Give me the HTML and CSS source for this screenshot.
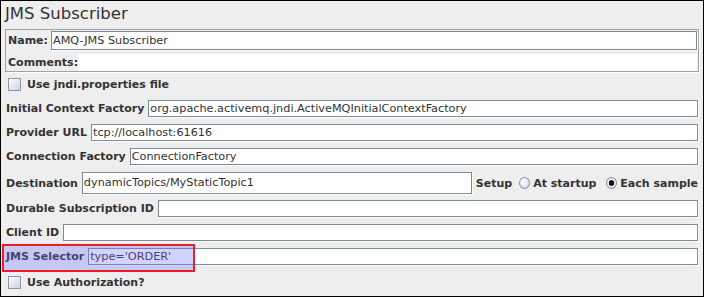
FILE: index.html
```html
<!DOCTYPE html>
<html lang="en">
<head>
    <meta charset="UTF-8">
    <title>JMS Subscriber</title>
    <link rel="stylesheet" href="styles.css">
</head>
<body>
    <div class="frame">
        <div class="title">JMS Subscriber</div>

        <!-- name / comments -->
        <div class="name-box">
            <div class="name-row">
                <span class="label">Name:</span>
                <div class="field">AMQ-JMS Subscriber</div>
            </div>
            <div class="comments-row">
                <span class="label">Comments:</span>
                <div class="comments"></div>
            </div>
        </div>

        <div class="check-row">
            <span class="checkbox"></span>
            <span class="label">Use jndi.properties file</span>
        </div>

        <div class="row row-icf">
            <span class="label">Initial Context Factory</span>
            <div class="field">org.apache.activemq.jndi.ActiveMQInitialContextFactory</div>
        </div>
        <div class="row">
            <span class="label">Provider URL</span>
            <div class="field">tcp://localhost:61616</div>
        </div>
        <div class="row">
            <span class="label">Connection Factory</span>
            <div class="field">ConnectionFactory</div>
        </div>
        <div class="row row-dest">
            <span class="label">Destination</span>
            <div class="field">dynamicTopics/MyStaticTopic1</div>
            <span class="label setup">Setup</span>
            <span class="radio"></span>
            <span class="label radio-text">At startup</span>
            <span class="radio checked"></span>
            <span class="label radio-text">Each sample</span>
        </div>
        <div class="row row-durable">
            <span class="label">Durable Subscription ID</span>
            <div class="field"></div>
        </div>
        <div class="row">
            <span class="label">Client ID</span>
            <div class="field"></div>
        </div>
        <div class="row">
            <span class="label">JMS Selector</span>
            <div class="field">type='ORDER'</div>
        </div>

        <div class="check-row check-auth">
            <span class="checkbox"></span>
            <span class="label">Use Authorization?</span>
        </div>

        <!-- highlight drawn over the selector row -->
        <div class="highlight"></div>
    </div>
</body>
</html>
```

FILE: styles.css
```css
body {
    margin: 0;
    background-color: #fff;
    font-family: "DejaVu Sans", sans-serif;
    color: #333;
}

.frame {
    position: relative;
    width: 704px;
    height: 297px;
    box-sizing: border-box;
    border: 1px solid #000;
    background-color: #eeeeee;
}

.title {
    height: 28px;
    padding-left: 4px;
    font-size: 16.5px;
    line-height: 25px;
    color: #333;
}

.label {
    font-size: 11px;
    font-weight: bold;
    white-space: nowrap;
    color: #333;
}

.field {
    flex: 1;
    height: 17px;
    box-sizing: border-box;
    border: 1px solid #7b8a98;
    box-shadow: 1px 1px 0 #fff;
    background-color: #fff;
    padding-left: 1px;
    font-size: 11.25px;
    line-height: 15px;
    white-space: nowrap;
    overflow: hidden;
}

/* name + comments panel */
.name-box {
    margin: 0 4px;
    height: 43px;
    box-sizing: border-box;
    border: 1px solid #a3a3a3;
    box-shadow: 1px 1px 0 #fff;
    padding: 1px 1px 0 2px;
}

.name-row {
    display: flex;
    align-items: center;
    gap: 3px;
    height: 19px;
}

.name-row .field {
    height: 19px;
    line-height: 17px;
}

.comments-row {
    display: flex;
    align-items: center;
    margin-top: 4px;
    height: 17px;
}

.comments {
    flex: 1;
    height: 17px;
    background-color: #fff;
}

/* checkboxes */
.check-row {
    display: flex;
    align-items: center;
    gap: 6px;
    height: 24px;
    padding-left: 7px;
}

.checkbox {
    width: 13px;
    height: 13px;
    box-sizing: border-box;
    border: 1px solid #8a97a4;
    background: linear-gradient(135deg, #ffffff 0%, #dfe6ee 55%, #c9d4df 100%);
}

.check-auth {
    margin-top: 5px;
    height: 25px;
}

/* field rows */
.row {
    display: flex;
    align-items: center;
    gap: 4px;
    height: 17px;
    margin-top: 7px;
    padding: 0 5px;
}

.row-icf {
    margin-top: 4px;
}

.row-dest {
    height: 22px;
}

.row-dest .field {
    height: 22px;
    line-height: 20px;
    flex: 0 0 390px;
}

.row-durable {
    margin-top: 6px;
}

.setup {
    margin-left: 0;
}

.radio {
    width: 12px;
    height: 12px;
    box-sizing: border-box;
    border: 1px solid #8a97a4;
    border-radius: 50%;
    margin-left: 3px;
    background: radial-gradient(circle at 35% 35%, #ffffff 0%, #dfe6ee 60%, #c5d0dc 100%);
}

.radio.checked {
    margin-left: 6px;
    background: radial-gradient(circle, #111 0 2.5px, #e8ecf0 3px, #d6dde5 100%);
}

.radio-text {
    margin-left: -1px;
}

/* red annotation box over JMS Selector */
.highlight {
    position: absolute;
    left: 1px;
    top: 243px;
    width: 193px;
    height: 28px;
    box-sizing: border-box;
    border: 2px solid #ee1c24;
    background-color: rgba(110, 110, 255, 0.3);
}
```
